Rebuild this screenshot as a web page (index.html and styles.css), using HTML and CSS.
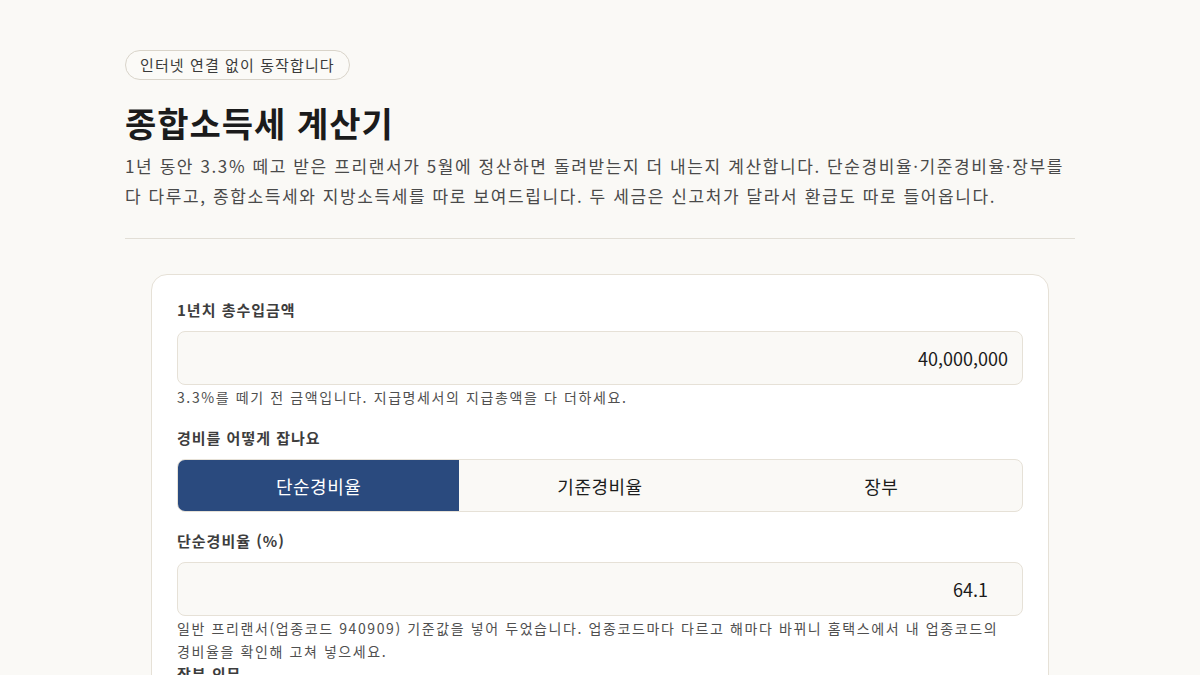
FILE: index.html
```html
<!DOCTYPE html>
<html lang="ko">
<head>
    <meta charset="UTF-8">
    <meta name="viewport" content="width=device-width, initial-scale=1.0">
    <title>종합소득세 계산기</title>
    <link rel="stylesheet" href="styles.css">
</head>
<body>

    <main class="page">
        <!-- Header -->
        <header class="page-head">
            <span class="pill">인터넷 연결 없이 동작합니다</span>
            <h1>종합소득세 계산기</h1>
            <p class="lead">1년 동안 3.3% 떼고 받은 프리랜서가 5월에 정산하면 돌려받는지 더 내는지 계산합니다. 단순경비율·기준경비율·장부를 다 다루고, 종합소득세와 지방소득세를 따로 보여드립니다. 두 세금은 신고처가 달라서 환급도 따로 들어옵니다.</p>
        </header>

        <!-- Input Card -->
        <section class="card">
            <div class="field">
                <label class="field-label" for="income">1년치 총수입금액</label>
                <input class="text-input" id="income" type="text" value="40,000,000">
                <p class="help">3.3%를 떼기 전 금액입니다. 지급명세서의 지급총액을 다 더하세요.</p>
            </div>

            <div class="field">
                <span class="field-label">경비를 어떻게 잡나요</span>
                <div class="segmented">
                    <button class="seg active">단순경비율</button>
                    <button class="seg">기준경비율</button>
                    <button class="seg">장부</button>
                </div>
            </div>

            <div class="field field-tight">
                <label class="field-label" for="rate">단순경비율 (%)</label>
                <input class="text-input num-input" id="rate" type="number" value="64.1" step="0.1">
                <p class="help">일반 프리랜서(업종코드 940909) 기준값을 넣어 두었습니다. 업종코드마다 다르고 해마다 바뀌니 홈택스에서 내 업종코드의 경비율을 확인해 고쳐 넣으세요.</p>
            </div>

            <div class="field">
                <span class="field-label">장부 의무</span>
            </div>
        </section>
    </main>

    <script>
        // Segmented control
        document.querySelectorAll(".seg").forEach(btn => {
            btn.addEventListener("click", () => {
                document.querySelectorAll(".seg").forEach(b => b.classList.remove("active"));
                btn.classList.add("active");
            });
        });
    </script>

</body>
</html>
```

FILE: styles.css
```css
/* Global Styles */
body {
    font-family: "Noto Sans CJK KR", "Noto Sans", sans-serif;
    background-color: #faf9f6;
    margin: 0;
    color: #1d1d1d;
    word-break: keep-all;
}

.page {
    max-width: 950px;
    margin: 0 auto;
    padding-top: 50px;
}

/* Header */
.page-head {
    padding-bottom: 27px;
    border-bottom: 1px solid #e2ded6;
    margin-bottom: 35px;
}

.pill {
    display: inline-block;
    padding: 3px 14px;
    border: 1px solid #d9d4ca;
    border-radius: 999px;
    background: #fbfaf7;
    font-size: 15px;
    line-height: 22px;
    letter-spacing: 1.1px;
    color: #3a3a3a;
}

.page-head h1 {
    margin: 21px 0 6px;
    font-size: 34px;
    line-height: 44px;
    font-weight: 700;
    letter-spacing: 1px;
    color: #1b1b1b;
}

.lead {
    margin: 0;
    font-size: 17px;
    line-height: 30px;
    letter-spacing: 1.6px;
    color: #4a4a4a;
}

/* Card */
.card {
    max-width: 846px;
    margin: 0 auto;
    padding: 24px 25px;
    background: #ffffff;
    border: 1px solid #e6e1d7;
    border-radius: 16px;
}

.field {
    margin-bottom: 18px;
}

.field-tight {
    margin-bottom: 0;
}

.field-label {
    display: block;
    margin-bottom: 10px;
    font-size: 15px;
    line-height: 22px;
    font-weight: 700;
    letter-spacing: 1px;
    color: #3d3d3d;
}

.text-input {
    display: block;
    box-sizing: border-box;
    width: 100%;
    height: 54px;
    padding: 0 14px;
    border: 1px solid #e6e1d7;
    border-radius: 8px;
    background: #faf9f6;
    font-family: inherit;
    font-size: 18px;
    color: #1b1b1b;
    text-align: right;
}

.num-input {
    padding-right: 19px;
}

.help {
    margin: 1px 0 0;
    font-size: 14px;
    line-height: 23px;
    letter-spacing: 1.6px;
    color: #4f4f4f;
}

/* Segmented control */
.segmented {
    display: grid;
    grid-template-columns: repeat(3, 1fr);
    box-sizing: border-box;
    height: 53px;
    margin-bottom: 3px;
    border: 1px solid #e6e1d7;
    border-radius: 8px;
    overflow: hidden;
    background: #faf9f6;
}

.seg {
    border: none;
    background: transparent;
    font-family: inherit;
    font-size: 18px;
    letter-spacing: 0.5px;
    color: #1d1d1d;
    cursor: pointer;
}

.seg.active {
    background: #2a4a7e;
    color: #ffffff;
}
```
